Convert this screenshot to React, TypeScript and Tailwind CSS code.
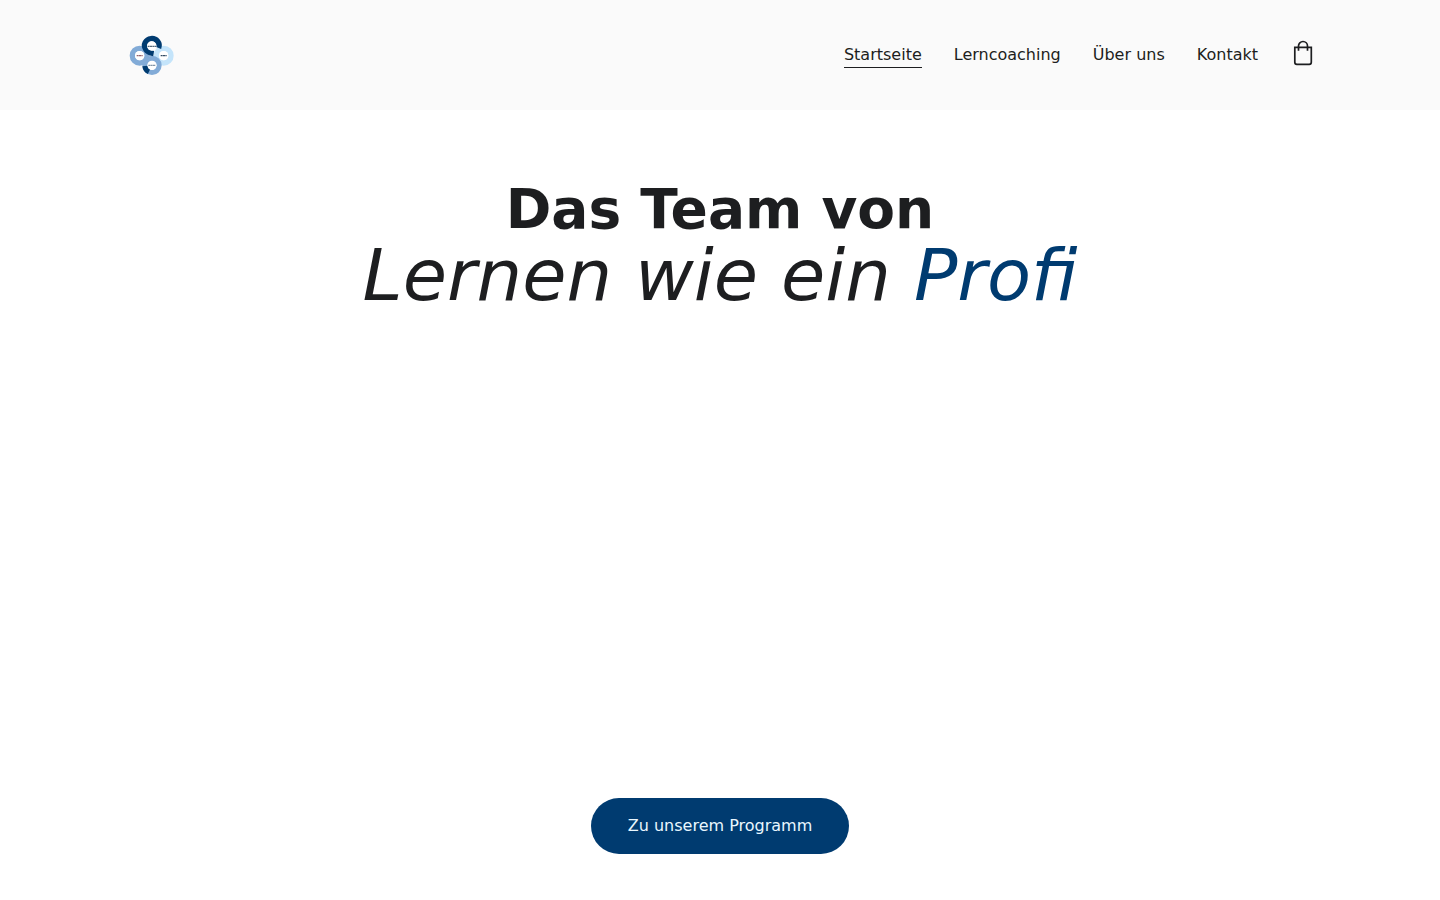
function Logo() {
  return (
    <svg viewBox="0 0 168 150" className="h-[50px] w-14" aria-hidden="true" fill="none">
      <g strokeWidth="16">
        <circle cx="119" cy="77" r="22" stroke="#c4e4fa" />
        <circle cx="47" cy="77" r="22" stroke="#82abd7" />
        <circle cx="84" cy="106" r="21" stroke="#82abd7" />
        <path d="M63 108a21 21 0 0 0 12 17" stroke="#003b70" />
        <path d="M104 54A22 21 0 1 0 65 58q6 10 24 13" stroke="#003b70" />
      </g>
      <g fill="#fff">
        <circle cx="83" cy="48" r="14" />
        <circle cx="47" cy="77" r="14" />
        <circle cx="119" cy="77" r="14" />
        <circle cx="84" cy="106" r="14" />
      </g>
      <g strokeWidth="4" strokeDasharray="6 1">
        <path d="M71 49h25" stroke="#536779" />
        <path d="M38 77h18" stroke="#94616b" />
        <path d="M110 77h18" stroke="#344d65" />
        <path d="M73 106h22" stroke="#8295a7" />
      </g>
    </svg>
  );
}

function BagIcon() {
  return (
    <svg viewBox="0 0 24 28" className="h-7 w-6" fill="none" stroke="#1d1e20" strokeWidth="1.7" aria-hidden="true">
      <path d="M3.8 8.3h16.5v15a2 2 0 0 1-2 2h-12.5a2 2 0 0 1-2-2z" />
      <path d="M7.5 11.7V7a4.5 4.5 0 0 1 9 0v4.7" />
    </svg>
  );
}

const links = ["Lerncoaching", "Über uns", "Kontakt"];

export default function App() {
  return (
    <div className="flex min-h-screen flex-col bg-white font-['DejaVu_Sans',sans-serif] text-base text-[#1d1e20]">
      <header className="bg-[#fafafa] px-6 py-[30px]">
        <div className="mx-auto flex max-w-[1192px] items-center justify-between">
          <a href="#start" aria-label="Lernen wie ein Profi">
            <Logo />
          </a>
          <nav className="flex items-center gap-8">
            <a href="#start" aria-current="page" className="border-b border-[#1d1e20] leading-6">
              Startseite
            </a>
            {links.map((label) => (
              <a key={label} href="#seite" className="border-b border-transparent leading-6">
                {label}
              </a>
            ))}
            <button type="button" aria-label="Warenkorb" className="mb-1 px-px">
              <BagIcon />
            </button>
          </nav>
        </div>
      </header>
      <main className="flex flex-1 flex-col items-center justify-between px-6 pt-[69px] pb-[46px]">
        <h1 className="text-center">
          <span className="block text-[55px] leading-[60px] font-bold">Das Team von</span>
          <em className="block text-[72px] leading-[72px]">
            Lernen wie ein <span className="text-[#003b70]">Profi</span>
          </em>
        </h1>
        <a href="#programm" className="rounded-full bg-[#003b70] px-[37px] py-4 leading-6 text-[#e9f7ff]">
          Zu unserem Programm
        </a>
      </main>
    </div>
  );
}
